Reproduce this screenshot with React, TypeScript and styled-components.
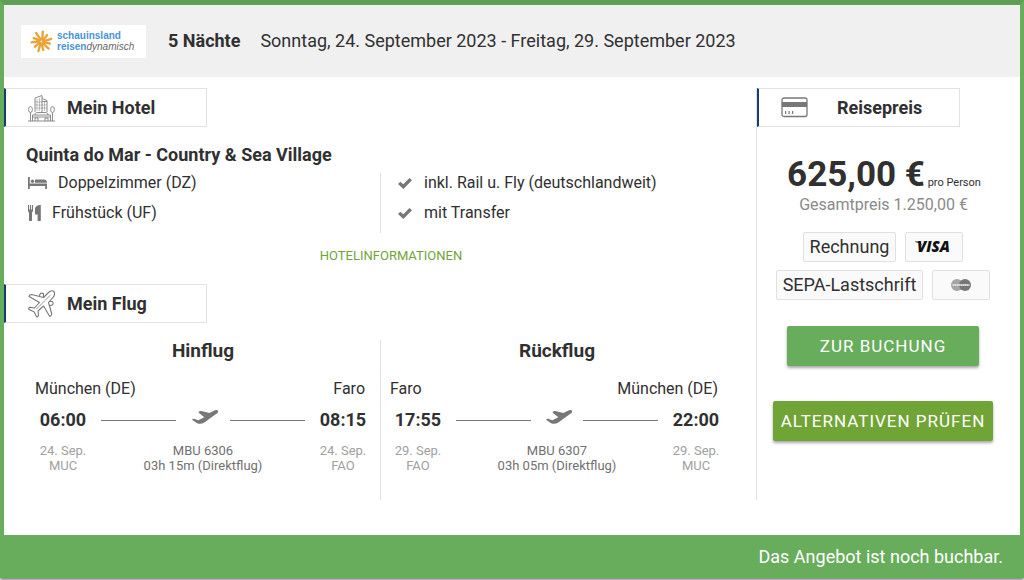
import React from "react";
import styled, { createGlobalStyle } from "styled-components";

const Global = createGlobalStyle`
  * { box-sizing: border-box; }
  body { margin: 0; background: #fff; color: #303030; font: 16px/20px Roboto, "Liberation Sans", sans-serif; }
  h2, h3, p, ul { margin: 0; padding: 0; font-weight: 400; }
  ul { list-style: none; }
`;

const Offer = styled.article`
  border: solid #68ad5c;
  border-width: 5px 4px 0;
  border-top-color: #5f9f54;
  box-shadow: 0 2px 3px rgba(0, 0, 0, 0.5);
  margin-bottom: 3px;
`;
const Header = styled.header`
  display: flex;
  align-items: center;
  height: 72px;
  padding: 0 17px;
  background: #f0f0f0;
  font-size: 18px;
`;
const LogoBox = styled.div`
  width: 125px;
  height: 33px;
  background: #fff;
  svg { display: block; }
`;
const Nights = styled.strong`
  margin: 0 20px 0 22px;
  font-weight: 700;
`;
const Body = styled.div`
  display: flex;
  padding: 11px 0 35px;
`;
const Main = styled.main`
  flex: 1;
`;
const Aside = styled.aside`
  width: 264px;
  border-left: 1px solid #e2e2e2;
`;
const Tab = styled.h2<{ $wide?: boolean }>`
  display: flex;
  align-items: center;
  gap: ${(p) => (p.$wide ? 29 : 12)}px;
  width: 203px;
  height: 39px;
  padding-left: 22px;
  border: 1px solid #e2e2e2;
  border-left: 2px solid #173d6e;
  font-size: 18px;
  font-weight: 700;
`;
const HotelName = styled.h3`
  padding: 18px 22px 8px;
  font-size: 18px;
  font-weight: 700;
`;
const Columns = styled.div`
  display: flex;
`;
const Features = styled.ul<{ $second?: boolean }>`
  display: flex;
  flex-direction: column;
  gap: 10px;
  width: ${(p) => (p.$second ? "auto" : "50%")};
  height: 60px;
  padding-left: ${(p) => (p.$second ? 17 : 24)}px;
  border-left: ${(p) => (p.$second ? "1px solid #e2e2e2" : "0")};
`;
const Feature = styled.li<{ $gap: number }>`
  display: flex;
  align-items: center;
  height: 20px;
  gap: ${(p) => p.$gap}px;
`;
const LinkRow = styled.p`
  padding: 13px 0 18px 22px;
  text-align: center;
  font-size: 13px;
`;
const InfoLink = styled.a`
  color: #6fa536;
  text-decoration: none;
`;
const Flights = styled.div`
  display: flex;
  margin-top: 17px;
`;
const Flight = styled.section<{ $second?: boolean }>`
  width: 50%;
  height: 160px;
  padding: ${(p) => (p.$second ? "0 32px 0 9px" : "0 9px 0 31px")};
  border-left: ${(p) => (p.$second ? "1px solid #e2e2e2" : "0")};
`;
const FlightTitle = styled.h3`
  padding-bottom: 17px;
  text-align: center;
  font-size: 19px;
  line-height: 22px;
  font-weight: 700;
`;
const Cities = styled.div`
  display: flex;
  justify-content: space-between;
  padding-right: 6px;
`;
const Times = styled.div`
  display: flex;
  align-items: center;
  padding: 11px 0 13px;
`;
const Time = styled.strong`
  width: 56px;
  text-align: center;
  font-size: 18px;
`;
const Route = styled.div`
  display: flex;
  flex: 1;
  align-items: center;
  justify-content: space-between;
  padding: 0 10px;
`;
const Line = styled.span`
  width: 75px;
  height: 1px;
  background: #777;
`;
const Details = styled.div`
  display: flex;
  justify-content: space-between;
  font-size: 13px;
  line-height: 15px;
  text-align: center;
  color: #707070;
`;
const Place = styled.p`
  width: 56px;
  color: #a0a0a0;
`;
const Price = styled.p`
  padding: 28px 9px 0 0;
  text-align: center;
  font-size: 11px;
  line-height: 20px;
  white-space: nowrap;
  strong {
    font-size: 35px;
    line-height: 40px;
  }
`;
const Total = styled.p`
  padding-right: 10px;
  text-align: center;
  color: #8a8a8a;
`;
const Payments = styled.div`
  display: flex;
  flex-wrap: wrap;
  justify-content: center;
  gap: 8px 9px;
  padding: 17px 20px 26px 9px;
`;
const Payment = styled.span<{ $card?: boolean }>`
  display: flex;
  align-items: center;
  justify-content: center;
  width: ${(p) => (p.$card ? "58px" : "auto")};
  height: 30px;
  padding: 0 6px;
  border: 1px solid #e0e0e0;
  border-radius: 2px;
  background: #fafafa;
  font-size: 18px;
`;
const Actions = styled.div`
  display: flex;
  flex-direction: column;
  align-items: center;
  gap: 35px;
  padding-right: 11px;
`;
const Button = styled.button<{ $olive?: boolean }>`
  width: ${(p) => (p.$olive ? 220 : 192)}px;
  height: 40px;
  padding: 0;
  border: 0;
  border-radius: 2px;
  background: ${(p) => (p.$olive ? "#71a436" : "#68ad5c")};
  box-shadow: 0 2px 3px rgba(0, 0, 0, 0.35);
  color: #fff;
  font: 17px Roboto, sans-serif;
  letter-spacing: 1px;
  white-space: nowrap;
`;
const Footer = styled.footer`
  padding: 12px 17px 11px;
  background: #68ad5c;
  color: #fff;
  font-size: 18px;
  text-align: right;
`;

const rays = [5, 38, 72, 100, 132, 165, 195, 228, 262, 290, 325];

const Logo = () => (
  <svg width="125" height="33" viewBox="0 0 125 33" role="img" aria-label="schauinsland reisen dynamisch">
    <g stroke="#e9a53a" strokeWidth="2.4" strokeLinecap="round">
      {rays.map((a, i) => (
        <line key={a} x1="21" y1="14.5" x2="21" y2={i % 2 ? 8 : 6.5} transform={`rotate(${a} 20.500 16.500)`} />
      ))}
    </g>
    <g fontFamily="Liberation Sans, sans-serif" fontSize="10" fontWeight="700" fill="#4a94d6">
      <text x="36" y="14">schauinsland</text>
      <text x="36" y="25">
        reisen<tspan fill="#666" fontWeight="400" fontStyle="italic">dynamisch</tspan>
      </text>
    </g>
  </svg>
);

const HotelIcon = () => (
  <svg width="27" height="28" viewBox="0 0 27 28" fill="none" stroke="#808080" strokeWidth="0.9">
    <path d="M7 18V4l7-2.500V18M14 4.500l5 2V18M14 7.500h5" />
    <path d="M9 5v12M11.500 4v13M16.500 7v10M7 8h7M7 11h7M7 14h7M14 11h5M14 14h5" strokeWidth="0.500" />
    <ellipse cx="2.500" cy="15.500" rx="1.900" ry="3" />
    <ellipse cx="24.500" cy="15.500" rx="1.900" ry="3" />
    <path d="M2.500 18.500V27M24.500 18.500V27M0 27h27M4.500 27v-6h18v6M7 21c0-2 1-2.500 3-2.500h7c2 0 3 .5 3 2.500M7 27v-3h3v3M17 27v-3h3v3M4.500 23h18" />
  </svg>
);

const AirplaneIcon = () => (
  <svg width="27" height="28" viewBox="0 0 27 28" fill="none" stroke="#777" strokeWidth="1.100" strokeLinejoin="round" strokeLinecap="round">
    <path d="M25.800 1.500C24 0 21.500 1.500 20 3l-4.500 4.500-12-3Q1.500 4.500 1 6.500L11.500 12.500l-5 5.500L2 17.300Q0 18.300 1 19.500l5 2.300 2.500 5q1.500.4 2-1.100L10 21l5.500-5 6.300 10.500q1.700-.5 2-2.500l-3.300-11.500L24.500 8c2-2 2.800-5 1.300-6.500z" />
    <path d="M11.500 6.300c0-2.500 1.500-4 4-2.600v2.800M21.500 11.500h3c1.500 2 .5 4-2.500 4" />
    <path d="M22 5.500 8.500 19" strokeWidth="0.800" strokeDasharray="3 1" />
  </svg>
);

const CardIcon = () => (
  <svg width="27" height="21" viewBox="0 0 27 21">
    <rect x="1" y="1" width="25" height="18.500" rx="2" fill="none" stroke="#777" strokeWidth="1.300" />
    <path fill="#777" d="M1 5h25v5H1zM4 14h1.200v3H4zM7.500 14h1.200v3H7.500zM11 14h1.200v3H11z" />
  </svg>
);

const BedIcon = () => (
  <svg width="19" height="12" viewBox="0 0 19 12" fill="#777">
    <path d="M0 0h1.800v6.500H19V12h-1.800V9H1.800v3H0zM7 2.500h8.500c2.500 0 3.500 1 3.500 3.200H7z" />
    <circle cx="4.500" cy="4.200" r="1.700" />
  </svg>
);

const CutleryIcon = () => (
  <svg width="13" height="16" viewBox="0 0 13 16" fill="#777">
    <path d="M0 0h1v4.500h.9V0h1.200v4.500H4V0h1v5.500c0 1-.4 1.500-1 2V15a1.400 1.400 0 0 1-3 0V7.500C.4 7 0 6.500 0 5.500zM12.800 0v15a1.400 1.400 0 0 1-3.200 0V9.500H7V4C7 1.500 10 0 12.800 0z" />
  </svg>
);

const CheckIcon = () => (
  <svg width="14" height="11" viewBox="0 0 14 11" fill="#777">
    <path d="M0 6 2.300 3.700 5.300 6.300 11.500 0 14 2.300 5.400 11z" />
  </svg>
);

const TakeoffIcon = () => (
  <svg width="30" height="20" viewBox="-12 0 90 60" fill="#777">
    <path d="M0 29c3-3 7-3 10-1l9 3 18-9-17-14c0-4 4-6 8-5l24 6 14-7c5-3 11-2 12 1 1 4-2 7-7 10L36 38c-8 5-18 4-23 0z" />
  </svg>
);

const VisaIcon = () => (
  <svg width="42" height="18" viewBox="0 0 42 18" role="img" aria-label="Visa">
    <text x="4" y="14" fontFamily="Open Sans, sans-serif" fontSize="15" fontWeight="800" fontStyle="italic" fill="#111">VISA</text>
    <path d="M2 3.500h5l2 4C7 5 5 4.500 2 4z" fill="#111" />
  </svg>
);

const MastercardIcon = () => (
  <svg width="20" height="12" viewBox="0 0 20 12" role="img" aria-label="Mastercard">
    <circle cx="6" cy="6" r="6" fill="#a5a5a5" />
    <circle cx="14" cy="6" r="6" fill="#777" />
    <path d="M1.500 6h17" stroke="#ddd" strokeWidth="2" strokeDasharray="1.700 .3" />
  </svg>
);

type Leg = {
  title: string; from: string; to: string; dep: string; arr: string;
  date: string; fromCode: string; toCode: string; no: string; duration: string;
};
const legs: Leg[] = [
  { title: "Hinflug", from: "München (DE)", to: "Faro", dep: "06:00", arr: "08:15", date: "24. Sep.", fromCode: "MUC", toCode: "FAO", no: "MBU 6306", duration: "03h 15m (Direktflug)" },
  { title: "Rückflug", from: "Faro", to: "München (DE)", dep: "17:55", arr: "22:00", date: "29. Sep.", fromCode: "FAO", toCode: "MUC", no: "MBU 6307", duration: "03h 05m (Direktflug)" },
];

export default function App() {
  return (
    <>
      <Global />
      <Offer>
        <Header>
          <LogoBox><Logo /></LogoBox>
          <Nights>5 Nächte</Nights>
          <span>Sonntag, 24. September 2023 - Freitag, 29. September 2023</span>
        </Header>
        <Body>
          <Main>
            <Tab><HotelIcon />Mein Hotel</Tab>
            <HotelName>Quinta do Mar - Country &amp; Sea Village</HotelName>
            <Columns>
              <Features>
                <Feature $gap={11}><BedIcon />Doppelzimmer (DZ)</Feature>
                <Feature $gap={11}><CutleryIcon />Frühstück (UF)</Feature>
              </Features>
              <Features $second>
                <Feature $gap={12}><CheckIcon />inkl. Rail u. Fly (deutschlandweit)</Feature>
                <Feature $gap={12}><CheckIcon />mit Transfer</Feature>
              </Features>
            </Columns>
            <LinkRow><InfoLink href="#hotel">HOTELINFORMATIONEN</InfoLink></LinkRow>
            <Tab><AirplaneIcon />Mein Flug</Tab>
            <Flights>
              {legs.map((leg, i) => (
                <Flight key={leg.no} $second={i === 1}>
                  <FlightTitle>{leg.title}</FlightTitle>
                  <Cities><span>{leg.from}</span><span>{leg.to}</span></Cities>
                  <Times>
                    <Time>{leg.dep}</Time>
                    <Route><Line /><TakeoffIcon /><Line /></Route>
                    <Time>{leg.arr}</Time>
                  </Times>
                  <Details>
                    <Place>{leg.date}<br />{leg.fromCode}</Place>
                    <p>{leg.no}<br />{leg.duration}</p>
                    <Place>{leg.date}<br />{leg.toCode}</Place>
                  </Details>
                </Flight>
              ))}
            </Flights>
          </Main>
          <Aside>
            <Tab $wide><CardIcon />Reisepreis</Tab>
            <Price><strong>625,00 €</strong> pro Person</Price>
            <Total>Gesamtpreis 1.250,00 €</Total>
            <Payments>
              <Payment>Rechnung</Payment>
              <Payment $card><VisaIcon /></Payment>
              <Payment>SEPA-Lastschrift</Payment>
              <Payment $card><MastercardIcon /></Payment>
            </Payments>
            <Actions>
              <Button type="button">ZUR BUCHUNG</Button>
              <Button type="button" $olive>ALTERNATIVEN PRÜFEN</Button>
            </Actions>
          </Aside>
        </Body>
        <Footer>Das Angebot ist noch buchbar.</Footer>
      </Offer>
    </>
  );
}
